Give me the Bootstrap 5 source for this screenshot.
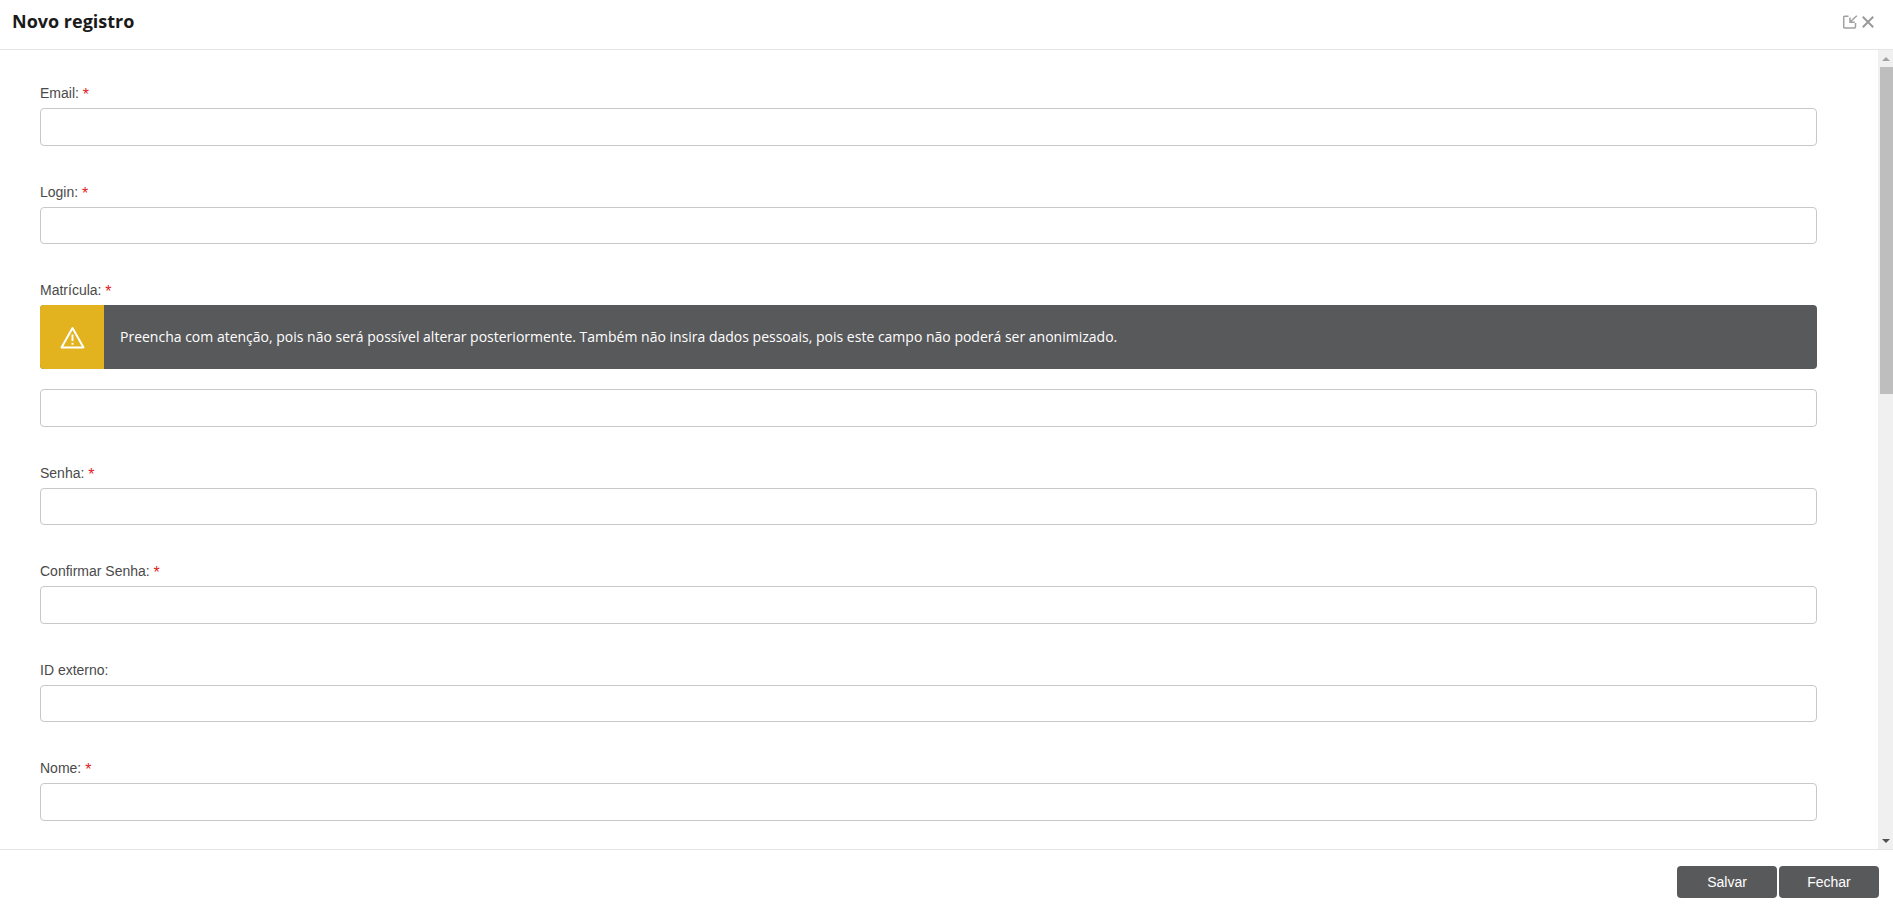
<!DOCTYPE html>
<html lang="pt-BR">
<head>
<meta charset="utf-8">
<title>Novo registro</title>
<link href="https://cdn.jsdelivr.net/npm/bootstrap@5.3.0/dist/css/bootstrap.min.css" rel="stylesheet">
<style>
html, body { height: 100%; overflow: hidden; background: #fff; }
.shell { height: 909px; }
.top-bar { height: 50px; border-bottom: 1px solid #e5e5e5; padding: 0 12px 5px; }
.top-title { font: 700 18px/1 "Open Sans", sans-serif; color: #1a1a1a; margin: 0 0 2px; }
.top-tools { color: #9a9a9a; gap: 4px; margin-right: 7px; }
.mid { height: 799px; overflow: hidden; }
.form-area { padding: 33px 61px 0 40px; overflow: hidden; }
.field-box { margin-bottom: 36px; }
.field-label { display: block; font: 14px/20px "Liberation Sans", sans-serif; color: #4a4a4a; margin-bottom: 5px; height: 20px; }
.req { color: #e01b24; font-size: 16px; line-height: 1; vertical-align: -2px; }
.field-input { height: 37.5px; border: 1px solid #c8c8c8; border-radius: 4px; padding: 6px 12px; box-shadow: none; }
.warn-box { height: 64px; background: #58595b; border-radius: 4px; overflow: hidden; margin-bottom: 20px; color: #fff; font: 14px/20px "Open Sans", sans-serif; }
.warn-icon { width: 64px; background: #e2b31f; }
.warn-text { padding-left: 16px; }
.sbar { width: 15px; background: #f0f0f0; }
.sbar-btn { height: 17px; }
.sbar-thumb { height: 327px; width: 13px; margin-left: 2px; background: #bebebe; }
.bottom-bar { height: 60px; border-top: 1px solid #e5e5e5; padding: 16px 14px 0 0; gap: 2px; }
.act-btn { width: 100px; height: 32px; padding: 0; border: 0; border-radius: 4px; background: #58595b; color: #fff; font: 14px/32px "Liberation Sans", sans-serif; }
.act-btn:hover { background: #4a4b4d; color: #fff; }
</style>
</head>
<body>
<div class="shell d-flex flex-column">
  <header class="top-bar d-flex align-items-center justify-content-between">
    <h1 class="top-title">Novo registro</h1>
    <div class="top-tools d-flex align-items-center">
      <svg width="15" height="14" viewBox="0 0 15 14" fill="none" stroke="#a0a0a0" stroke-width="1.5" aria-hidden="true"><path d="M5.5 1.2H1.6a.9.9 0 0 0-.9.9v10a.9.9 0 0 0 .9.9h10a.9.9 0 0 0 .9-.9V8"/><path d="M13.8.8 7.4 6.8M7 2.6v4.6h4.8"/></svg>
      <svg width="12" height="12" viewBox="0 0 12 12" fill="none" stroke="#9a9a9a" stroke-width="2" aria-hidden="true"><path d="M.8.8 11.2 11.2M11.2.8.8 11.2"/></svg>
    </div>
  </header>
  <div class="mid d-flex">
    <main class="form-area flex-grow-1">
      <div class="field-box"><label class="field-label">Email: <span class="req">*</span></label><input class="form-control field-input" type="text"></div>
      <div class="field-box"><label class="field-label">Login: <span class="req">*</span></label><input class="form-control field-input" type="text"></div>
      <div class="field-box"><label class="field-label">Matrícula: <span class="req">*</span></label>
        <div class="warn-box d-flex">
          <div class="warn-icon d-flex align-items-center justify-content-center">
            <svg width="25" height="23" viewBox="0 0 25 23" fill="none" stroke="#fff" stroke-width="2" stroke-linejoin="round" aria-hidden="true"><path d="M12.5 2 23.5 21.5H1.5Z"/><path d="M12.5 8.5v6.5M12.5 16.8v2" stroke-linecap="butt"/></svg>
          </div>
          <div class="warn-text d-flex align-items-center">Preencha com atenção, pois não será possível alterar posteriormente. Também não insira dados pessoais, pois este campo não poderá ser anonimizado.</div>
        </div>
        <input class="form-control field-input" type="text"></div>
      <div class="field-box"><label class="field-label">Senha: <span class="req">*</span></label><input class="form-control field-input" type="text"></div>
      <div class="field-box"><label class="field-label">Confirmar Senha: <span class="req">*</span></label><input class="form-control field-input" type="text"></div>
      <div class="field-box"><label class="field-label">ID externo:</label><input class="form-control field-input" type="text"></div>
      <div class="field-box"><label class="field-label">Nome: <span class="req">*</span></label><input class="form-control field-input" type="text"></div>
    </main>
    <div class="sbar d-flex flex-column flex-shrink-0">
      <div class="sbar-btn d-flex align-items-center justify-content-center"><svg width="8" height="4" viewBox="0 0 8 4" aria-hidden="true"><path d="M4 0 8 4H0Z" fill="#a3a3a3"/></svg></div>
      <div class="sbar-thumb"></div>
      <div class="flex-grow-1"></div>
      <div class="sbar-btn d-flex align-items-center justify-content-center"><svg width="8" height="4" viewBox="0 0 8 4" aria-hidden="true"><path d="M0 0H8L4 4Z" fill="#505050"/></svg></div>
    </div>
  </div>
  <footer class="bottom-bar d-flex justify-content-end align-items-start">
    <button type="button" class="btn act-btn">Salvar</button>
    <button type="button" class="btn act-btn">Fechar</button>
  </footer>
</div>
<script src="https://cdn.jsdelivr.net/npm/bootstrap@5.3.0/dist/js/bootstrap.bundle.min.js"></script>
</body>
</html>
